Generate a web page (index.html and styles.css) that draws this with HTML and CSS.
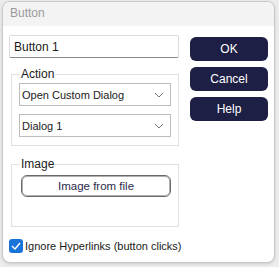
FILE: index.html
```html
<!DOCTYPE html>
<html lang="en">
<head>
  <meta charset="UTF-8">
  <title>Button</title>
  <link rel="stylesheet" href="styles.css">
</head>
<body>
<div class="window">
  <div class="titlebar">Button</div>
  <div class="content">
    <div class="main">
      <div class="left">
        <div class="textbox">Button 1</div>

        <fieldset class="group action-group">
          <legend>Action</legend>
          <div class="select">
            <span>Open Custom Dialog</span>
            <svg class="chevron" width="10" height="6" viewBox="0 0 10 6"><path d="M1 1 L5 5 L9 1" fill="none" stroke="#777" stroke-width="1"/></svg>
          </div>
          <div class="select">
            <span>Dialog 1</span>
            <svg class="chevron" width="10" height="6" viewBox="0 0 10 6"><path d="M1 1 L5 5 L9 1" fill="none" stroke="#777" stroke-width="1"/></svg>
          </div>
        </fieldset>

        <fieldset class="group image-group">
          <legend>Image</legend>
          <div class="file-btn">Image from file</div>
        </fieldset>
      </div>

      <div class="buttons">
        <div class="btn">OK</div>
        <div class="btn">Cancel</div>
        <div class="btn">Help</div>
      </div>
    </div>

    <label class="check">
      <span class="box">
        <svg width="10" height="8" viewBox="0 0 10 8"><path d="M1 4 L4 7 L9 1" fill="none" stroke="#fff" stroke-width="1.4"/></svg>
      </span>
      Ignore Hyperlinks (button clicks)
    </label>
  </div>
</div>
</body>
</html>
```

FILE: styles.css
```css
body {
  margin: 0;
  background-color: #ececec;
  font-family: "Liberation Sans", Arial, sans-serif;
  font-size: 12px;
  color: #1a1a1a;
}
.window {
  margin: 1px 4px 4px 2px;
  height: 262px;
  box-sizing: border-box;
  background-color: #fff;
  border: 1px solid #c9c9c9;
  border-radius: 8px;
  overflow: hidden;
  box-shadow: 0 1px 3px rgba(0, 0, 0, 0.15);
}
.titlebar {
  height: 24px;
  line-height: 23px;
  padding-left: 7px;
  background-color: #f3f3f3;
  color: #9a9a9a;
  font-size: 12px;
}
.content {
  padding: 9px 6px 0 6px;
}
.main {
  display: flex;
}
.left {
  width: 170px;
}
.textbox {
  height: 23px;
  box-sizing: border-box;
  border: 1px solid #dcdcdc;
  border-bottom-color: #8a8a8a;
  border-radius: 2px;
  padding: 4px 0 0 4px;
}
.group {
  margin: 9px 0 0 2px;
  width: 168px;
  box-sizing: border-box;
  border: 1px solid #e0e0e0;
  padding: 0 7px 8px 7px;
}
.group legend {
  padding: 0 1px;
  margin-left: 1px;
  color: #1a1a1a;
}
.select {
  display: flex;
  align-items: center;
  justify-content: space-between;
  height: 23px;
  box-sizing: border-box;
  border: 1px solid #bdbdbd;
  padding: 0 6px 0 2px;
  margin-top: 2px;
  font-size: 11px;
}
.select + .select {
  margin-top: 8px;
}
.image-group {
  margin-top: 11px;
  height: 70px;
}
.file-btn {
  margin: 4px 0 0 2px;
  height: 22px;
  box-sizing: border-box;
  border: 1px solid #6a6a6a;
  border-radius: 6px;
  box-shadow: inset 0 0 0 1px #b0b0b0;
  text-align: center;
  line-height: 20px;
  color: #2a2a4a;
  font-size: 11.5px;
}
.buttons {
  margin-left: 11px;
  padding-top: 2px;
  display: flex;
  flex-direction: column;
  gap: 6px;
}
.btn {
  width: 78px;
  height: 24px;
  line-height: 24px;
  border-radius: 6px;
  background-color: #1e1f45;
  color: #fff;
  text-align: center;
}
.check {
  display: flex;
  align-items: center;
  gap: 2px;
  margin-top: 12px;
  font-size: 11px;
}
.check .box {
  width: 14px;
  height: 14px;
  border-radius: 3px;
  background-color: #1a73d9;
  display: flex;
  align-items: center;
  justify-content: center;
}
```
